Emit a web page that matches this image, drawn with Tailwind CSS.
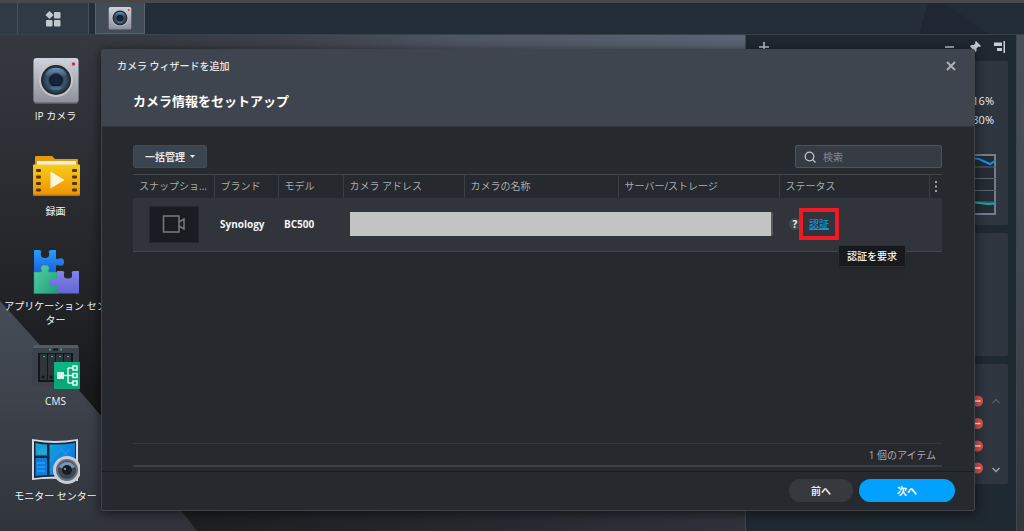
<!DOCTYPE html>
<html lang="ja">
<head>
    <meta charset="utf-8">
    <title>Surveillance Station</title>
    <script src="https://cdn.jsdelivr.net/npm/@tailwindcss/browser@4"></script>
</head>
<body class="h-screen overflow-hidden relative flex flex-col bg-[#2d3037] font-['Open_Sans','Noto_Sans_CJK_JP',sans-serif] text-[10px] leading-[14px] text-gray-200">

    <!-- wallpaper -->
    <svg class="absolute inset-0 w-full h-full -z-10" viewBox="0 0 1024 531" preserveAspectRatio="none" aria-hidden="true">
        <defs>
            <linearGradient id="wallTop" x1="0" y1="0" x2="0" y2="1">
                <stop offset="0" stop-color="#383c43"/><stop offset="0.35" stop-color="#2a2c31"/><stop offset="0.6" stop-color="#1f2124"/><stop offset="0.8" stop-color="#141517"/><stop offset="1" stop-color="#141517"/>
            </linearGradient>
            <linearGradient id="wallBand" x1="0" y1="0" x2="1" y2="0">
                <stop offset="0.08" stop-color="#3a3e46" stop-opacity="0"/><stop offset="0.45" stop-color="#4f5663"/><stop offset="0.73" stop-color="#5a6575"/><stop offset="1" stop-color="#444b57"/>
            </linearGradient>
            <linearGradient id="wallFloor" x1="0" y1="0" x2="1" y2="0">
                <stop offset="0" stop-color="#1c1d20"/><stop offset="1" stop-color="#31333c"/>
            </linearGradient>
            <linearGradient id="wallLow" x1="0" y1="0" x2="0" y2="1">
                <stop offset="0" stop-color="#464d57"/><stop offset="1" stop-color="#31343b"/>
            </linearGradient>
            <linearGradient id="wallRight" x1="0" y1="0" x2="0" y2="1">
                <stop offset="0" stop-color="#4a515d"/><stop offset="0.5" stop-color="#424853"/><stop offset="1" stop-color="#34363b"/>
            </linearGradient>
        </defs>
        <rect width="1024" height="531" fill="url(#wallTop)"/>
        <rect width="1024" height="60" fill="url(#wallBand)"/>
        <rect x="150" y="500" width="610" height="31" fill="url(#wallFloor)"/>
        <path d="M0 301L40 345L103 418L181 510L197 531H0z" fill="url(#wallLow)"/>
        <rect x="1010" width="14" height="531" fill="url(#wallRight)"/>
    </svg>

    <!-- taskbar -->
    <header class="h-[35px] shrink-0 flex border-t-3 border-b border-t-[#484848] border-b-[#39424b] bg-[#242e38] relative">
        <div class="w-[18px] border-r border-[#46525d] bg-[#2f3a44]"></div>
        <button class="w-[71px] flex items-center justify-center border-r border-[#46525d] bg-[#2f3a44]" aria-label="メイン メニュー">
            <svg class="w-4 h-4" viewBox="0 0 16 16" fill="#c3c8cd">
                <path d="M4.500 0L8.600 4L4.500 8L.400 4z"/>
                <rect x="9" y="1" width="6.500" height="6.500" rx="1"/>
                <rect x="1" y="9" width="6.500" height="6.500" rx="1"/>
                <rect x="9" y="9" width="6.500" height="6.500" rx="1"/>
            </svg>
        </button>
        <button class="ml-[6px] w-[50px] flex items-center justify-center border border-t-0 border-[#56616c] bg-[#414c57]" aria-label="IP カメラ">
            <svg class="w-6 h-6" viewBox="0 0 48 48"><use href="#camera"/></svg>
        </button>
        <svg class="ml-auto w-[105px] h-full" viewBox="0 0 105 31" preserveAspectRatio="none" aria-hidden="true">
            <path d="M9 0H105V31H0z" fill="#1e2732"/>
            <path d="M25 0H105V31H70z" fill="#222c37"/>
        </svg>
    </header>

    <main class="flex-1 min-h-0 flex justify-between">
        <!-- desktop shortcuts -->
        <nav class="w-[111px] pt-[21px] text-center text-gray-100 [&>a]:h-[95px] [&>a]:flex [&>a]:flex-col [&>a]:items-center [&>a]:gap-[5px] [&_svg]:w-12 [&_svg]:h-12 [&_svg]:shrink-0">
            <a href="#">
                <svg viewBox="0 0 48 48">
                    <defs>
                        <linearGradient id="camBody" x1="0" y1="0" x2="0" y2="1"><stop offset="0" stop-color="#cfd3de"/><stop offset="1" stop-color="#8d9099"/></linearGradient>
                        <radialGradient id="camLens" cx="0.5" cy="0.5" r="0.5"><stop offset="0" stop-color="#1c2c4c"/><stop offset="0.35" stop-color="#131d2c"/><stop offset="0.65" stop-color="#3a566d"/><stop offset="1" stop-color="#27333e"/></radialGradient>
                        <linearGradient id="camShine" x1="0" y1="0" x2="0" y2="1"><stop offset="0" stop-color="#6ea0c4" stop-opacity="0.9"/><stop offset="1" stop-color="#6ea0c4" stop-opacity="0"/></linearGradient>
                    </defs>
                    <g id="camera">
                        <rect x="1.500" y="3" width="45" height="45" rx="3" fill="#55585f"/>
                        <rect x="1.500" y="2" width="45" height="44.500" rx="3" fill="url(#camBody)"/>
                        <circle cx="24" cy="24" r="17" fill="#c3c5cb"/>
                        <circle cx="24" cy="24" r="15" fill="#23292f"/>
                        <circle cx="24" cy="24" r="13.500" fill="url(#camLens)"/>
                        <path d="M13 19A12 12 0 0 1 35 19Q24 24 13 19z" fill="url(#camShine)"/>
                        <circle cx="24" cy="24" r="6" fill="#17243b" stroke="#0f1722"/>
                        <ellipse cx="24" cy="32" rx="6" ry="2" fill="#4382a8" opacity="0.6"/>
                        <circle cx="41.500" cy="8" r="1.800" fill="#dc2f36"/>
                    </g>
                </svg>
                <span>IP カメラ</span>
            </a>
            <a href="#">
                <svg viewBox="0 0 48 48">
                    <defs>
                        <linearGradient id="folder" x1="0" y1="0" x2="0" y2="1"><stop offset="0" stop-color="#f9cb1c"/><stop offset="1" stop-color="#ee9503"/></linearGradient>
                    </defs>
                    <path d="M3 6Q3 5 4 5H20L23 8H45Q46 8 46 9V18H3z" fill="#e79a0c"/>
                    <path d="M5 10H44V16H5z" fill="#f0f0ec"/>
                    <path d="M1 14H48V44Q48 45 47 45H2Q1 45 1 44z" fill="#bd7209"/>
                    <rect x="1" y="13.500" width="47" height="30" rx="1" fill="url(#folder)"/>
                    <g fill="#503708">
                        <rect x="4" y="18" width="5" height="3" rx="1"/><rect x="4" y="24.500" width="5" height="3" rx="1"/><rect x="4" y="31" width="5" height="3" rx="1"/><rect x="4" y="37.500" width="5" height="3" rx="1"/>
                        <rect x="40" y="18" width="5" height="3" rx="1"/><rect x="40" y="24.500" width="5" height="3" rx="1"/><rect x="40" y="31" width="5" height="3" rx="1"/><rect x="40" y="37.500" width="5" height="3" rx="1"/>
                    </g>
                    <path d="M18.500 20.500L32.500 29L18.500 37.500z" fill="#fff4dc"/>
                </svg>
                <span>録画</span>
            </a>
            <a href="#">
                <svg viewBox="0 0 48 48">
                    <defs>
                        <linearGradient id="pzBlue" x1="0" y1="0" x2="0" y2="1"><stop offset="0" stop-color="#2a9cff"/><stop offset="1" stop-color="#1b62d8"/></linearGradient>
                        <linearGradient id="pzGreen" x1="0" y1="0" x2="1" y2="1"><stop offset="0" stop-color="#55d3a4"/><stop offset="1" stop-color="#1f9d79"/></linearGradient>
                        <linearGradient id="pzViolet" x1="0" y1="0" x2="0" y2="1"><stop offset="0" stop-color="#8583e8"/><stop offset="1" stop-color="#6566d6"/></linearGradient>
                    </defs>
                    <path d="M2 4H7Q10 4 9 7Q8 12 13 12Q18 12 17 7Q16 4 19 4H24V12Q24 14 27 12.500Q32 11 32 16Q32 21 27 19.500Q24 18 24 21V26H2z" fill="url(#pzBlue)"/>
                    <path d="M2 26H8Q11 26 9 23.500Q8 19 13 19Q18 19 17 23.500Q15 26 18 26H25V47.500H2z" fill="url(#pzGreen)" stroke="#2a8f86" stroke-width="0.500"/>
                    <path d="M25 25H30Q33 25 32 28Q31 32.500 36 32.500Q41 32.500 40 28Q39 25 42 25H47V47.500H25V42Q25 39 22 40Q17 41 17 36.500Q18 32 22 33.500Q25 35 25 31z" fill="url(#pzViolet)"/>
                </svg>
                <span class="w-full">アプリケーション センター</span>
            </a>
            <a href="#">
                <svg viewBox="0 0 48 48">
                    <path d="M1 5L3 4H45L47 6V43Q47 45 45 45H2Q0 45 0 43z" fill="#3c414b"/>
                    <path d="M2 4H46V7H1z" fill="#555b66"/>
                    <rect x="6" y="12" width="35" height="29" fill="#14171a"/>
                    <g fill="#30343b"><rect x="8" y="13" width="7" height="26"/><rect x="16" y="13" width="7" height="26"/><rect x="24" y="13" width="7" height="26"/><rect x="32" y="13" width="7" height="26"/></g>
                    <g fill="#2cc48b"><rect x="11" y="15" width="2" height="1"/><rect x="19" y="15" width="2" height="1"/><rect x="27" y="15" width="2" height="1"/><rect x="35" y="15" width="2" height="1"/><circle cx="18" cy="8.500" r="1"/><circle cx="29" cy="8.500" r="1"/></g>
                    <path d="M21 8.500H26" stroke="#15171a" stroke-width="2"/>
                    <g fill="#111316"><circle cx="11" cy="36" r="1.500"/><circle cx="19" cy="36" r="1.500"/></g>
                    <rect x="22" y="21" width="27" height="27" rx="1" fill="#0cb584"/>
                    <path d="M22 35L49 21V48H22z" fill="#079a70" opacity="0.500"/>
                    <rect x="25" y="31" width="7" height="7" fill="#d8f5e9"/>
                    <path d="M32 34.500H41M36 27V42M36 27H41M36 42H41" stroke="#d8f5e9" stroke-width="1.500" fill="none"/>
                    <g fill="#0cb584" stroke="#e6faf1" stroke-width="1.500"><rect x="41" y="25" width="4" height="4"/><rect x="41" y="32.500" width="4" height="4"/><rect x="41" y="40" width="4" height="4"/></g>
                </svg>
                <span>CMS</span>
            </a>
            <a href="#">
                <svg viewBox="0 0 48 48">
                    <defs><linearGradient id="monitor" x1="0" y1="0" x2="1" y2="1"><stop offset="0" stop-color="#10a5df"/><stop offset="1" stop-color="#0b63dc"/></linearGradient></defs>
                    <path d="M0 3Q23 7 46 3V45Q23 41 0 44z" fill="#d5dae0"/>
                    <path d="M2 5Q23 9 44 5V42Q23 39 2 42z" fill="#15283a"/>
                    <path d="M3.500 7Q10 8.500 15 8.500V19.500H3.500z" fill="#16a0d2"/>
                    <path d="M3.500 22H15V39L3.500 40z" fill="#0a7fe2"/>
                    <path d="M17.500 8.500Q32 9 43 7V40Q30 38 17.500 39z" fill="url(#monitor)"/>
                    <path d="M18 25L29 13L43 27M18 34L38 13" stroke="#2b8cf0" stroke-width="1.500" fill="none"/>
                    <path d="M7 18V14M10 18V11M13 18V13M5 27H13M5 31H13M5 35H13" stroke="#38b1e9" stroke-width="1"/>
                    <circle cx="35" cy="34" r="14" fill="#c9ccd5"/>
                    <circle cx="35" cy="34" r="11" fill="#666c75"/>
                    <circle cx="35" cy="34" r="9" fill="#3b4654"/>
                    <path d="M27 31A9 9 0 0 1 43 31Q35 35 27 31z" fill="#7d95ae"/>
                    <circle cx="35" cy="34" r="5" fill="#151d27"/>
                    <circle cx="33" cy="33" r="1" fill="#9bb1c6"/>
                </svg>
                <span>モニター センター</span>
            </a>
        </nav>

        <!-- widget panel -->
        <aside class="w-[272px] mr-[7px] px-2 flex flex-col gap-2 border border-y-0 border-[#41474f] bg-[#1f2932] text-[11px] font-medium text-gray-100">
            <div class="h-[18px] pt-[5px] pl-[2px] flex items-center justify-between text-[#c8cdd3]">
                <button aria-label="追加"><svg class="w-4 h-4" viewBox="0 0 16 16" stroke="currentColor" stroke-width="1.500"><path d="M8 3V13M3 8H13"/></svg></button>
                <div class="flex gap-[9px]">
                    <button aria-label="最小化"><svg class="w-4 h-4" viewBox="0 0 16 16" stroke="currentColor" stroke-width="1.500"><path d="M3 8H12"/></svg></button>
                    <button aria-label="固定"><svg class="w-4 h-4" viewBox="0 0 16 16" fill="currentColor"><path d="M9 2L14 7L12.500 8L11.500 7.500L9.500 9.500L9.500 12L8 13L5.500 10L3 13L2.500 12.500L5 9.500L3 7.500L4 6L6.500 6L8.500 4.500L8 3z"/></svg></button>
                    <button aria-label="右に揃える"><svg class="w-4 h-4" viewBox="0 0 16 16" fill="currentColor"><path d="M2 3.500H10V7H2zM5 9H10V12H5zM11.500 2H13V14H11.500z"/></svg></button>
                </div>
            </div>
            <section class="h-[164px] rounded-xs bg-[#2f3640] px-3 pt-[31px] flex flex-col text-right">
                <span class="h-[19px] leading-[18px] pr-[2px]">16%</span>
                <span class="h-[19px] leading-[18px] pr-[2px]">30%</span>
                <svg class="mt-6 w-full h-[61px] shrink-0" viewBox="0 0 230 61" preserveAspectRatio="none" fill="none">
                    <rect x="1" y="1" width="228" height="59" fill="#252c34" stroke="#747d8d" stroke-width="2"/>
                    <path d="M0 13H230M0 24.500H230M0 36.500H230M0 48H230" stroke="#5a6370"/>
                    <path d="M0 6L205 4L213 5L224 10L229 7" stroke="#0b94e8" stroke-width="2"/>
                    <path d="M0 48L205 48L222 50L229 49.500" stroke="#16a7a5" stroke-width="2"/>
                </svg>
            </section>
            <section class="h-[123px] rounded-xs bg-[#2f3640]"></section>
            <section class="h-[120px] rounded-xs bg-[#2f3640] py-[26px] pr-[6px] flex justify-end gap-[7px]">
                <svg class="w-[11px] h-[90px]" viewBox="0 0 11 90">
                    <g fill="#e2504b"><circle cx="5.500" cy="11" r="5.500"/><circle cx="5.500" cy="33.500" r="5.500"/><circle cx="5.500" cy="56" r="5.500"/><circle cx="5.500" cy="78" r="5.500"/></g>
                    <path d="M2.500 11H8.500M2.500 33.500H8.500M2.500 56H8.500M2.500 78H8.500" stroke="#ffe9e6" stroke-width="1.500"/>
                </svg>
                <svg class="w-[12px] h-[90px]" viewBox="0 0 12 90" fill="none">
                    <path d="M2.500 13L6 9.500L9.500 13" stroke="#5a626d" stroke-width="1.200"/>
                    <path d="M2.500 78L6 81.500L9.500 78" stroke="#98a0aa" stroke-width="1.500"/>
                </svg>
            </section>
        </aside>
    </main>

    <!-- add camera wizard -->
    <div role="dialog" aria-labelledby="wizardTitle" class="absolute left-[101px] right-[49px] top-[49px] bottom-[20px] flex flex-col border border-[#404448] rounded-xs bg-[#26292e] shadow-[0_2px_12px_rgba(0,0,0,0.6)]">
        <div class="h-[77px] shrink-0 bg-[#3f454e] border-b border-[#33373d] pt-[9px] pl-[15px] pr-[16px]">
            <div class="flex items-center justify-between">
                <span id="wizardTitle" class="font-medium">カメラ ウィザードを追加</span>
                <button aria-label="閉じる"><svg class="w-[14px] h-[14px]" viewBox="0 0 14 14" stroke="#b0b4b9" stroke-width="1.800"><path d="M3 3L11 11M11 3L3 11"/></svg></button>
            </div>
            <h1 class="mt-[18px] ml-4 text-[13px] leading-5 font-bold text-white">カメラ情報をセットアップ</h1>
        </div>

        <div class="flex-1 min-h-0 flex flex-col pl-[31px] pr-8 pt-[18px] pb-1">
            <div class="flex justify-between">
                <button class="h-[23px] w-[74px] flex items-center justify-center gap-[5px] rounded-xs border border-[#414b55] bg-[#3b454f] font-bold text-gray-200">
                    一括管理
                    <svg class="w-[5px] h-[3px]" viewBox="0 0 5 3" fill="currentColor"><path d="M0 0H5L2.500 3z"/></svg>
                </button>
                <label class="h-[23px] w-[147px] flex items-center gap-[7px] px-2 rounded-xs border border-[#4b555f] bg-[#353c44]">
                    <svg class="w-3 h-3 shrink-0" viewBox="0 0 12 12" fill="none" stroke="#c2c6ca" stroke-width="1.300"><circle cx="5.500" cy="5.500" r="4.300"/><path d="M8.500 8.500L11.500 11.500"/></svg>
                    <input type="text" placeholder="検索" aria-label="検索" class="min-w-0 flex-1 bg-transparent outline-none placeholder:text-[#82878d]">
                </label>
            </div>

            <table class="mt-[6px] w-full table-fixed border-collapse text-left">
                <colgroup>
                    <col class="w-[81px]">
                    <col class="w-[64px]">
                    <col class="w-[65px]">
                    <col class="w-[121px]">
                    <col class="w-[154px]">
                    <col class="w-[161px]">
                    <col>
                    <col class="w-[13px]">
                </colgroup>
                <thead>
                    <tr class="h-[23px] border-t border-[#42464b] text-[#a8abaf] [&>th]:font-normal [&>th]:px-[6px] [&>th]:whitespace-nowrap [&>th+th]:border-l [&>th+th]:border-[#3a3e43]">
                        <th>スナップショ...</th>
                        <th>ブランド</th>
                        <th>モデル</th>
                        <th>カメラ アドレス</th>
                        <th>カメラの名称</th>
                        <th>サーバー/ストレージ</th>
                        <th>ステータス</th>
                        <th class="!px-0"><button class="flex w-full justify-center" aria-label="列"><svg class="w-[2px] h-[11px]" viewBox="0 0 2 11" fill="#a0a3a7"><path d="M0 0H2V2H0zM0 4.500H2V6.500H0zM0 9H2V11H0z"/></svg></button></th>
                    </tr>
                </thead>
                <tbody>
                    <tr class="h-[54px] border-b border-[#42474c] bg-[#31353b] font-bold text-gray-100 [&>td]:px-[6px]">
                        <td>
                            <div class="mx-auto w-[50px] h-[37px] flex items-center justify-center border border-[#24272b] bg-[#191c20]">
                                <svg class="w-6 h-5" viewBox="0 0 24 20" fill="none" stroke="#77797c" stroke-width="1.500"><rect x="1.500" y="2" width="15.500" height="16"/><path d="M17 8L22 5V15L17 12"/></svg>
                            </div>
                        </td>
                        <td>Synology</td>
                        <td>BC500</td>
                        <td colspan="3"><div class="h-[24px] ml-px rounded-r-xs border-r-2 border-[#535b64] bg-[#c3c3c3]"></div></td>
                        <td>
                            <div class="flex items-center gap-1 pl-1">
                                <span class="w-3 h-3 rounded-full bg-[#424850] text-center leading-3">?</span>
                                <span class="relative ml-1">
                                    <a href="#" class="font-medium text-[#0c93ea] underline">認証</a>
                                    <span class="absolute -inset-x-[10px] -inset-y-[9px] border-4 border-[#ed1c24] pointer-events-none"></span>
                                    <span role="tooltip" class="absolute left-[29px] top-[28px] w-[68px] h-[22px] flex items-center justify-center rounded-xs border border-[#2b2f32] bg-[#17191c] font-medium whitespace-nowrap shadow-md">認証を要求</span>
                                </span>
                            </div>
                        </td>
                        <td></td>
                    </tr>
                </tbody>
            </table>

            <div class="mt-auto h-[24px] flex items-center justify-end px-[6px] border-t border-b-2 border-t-[#34373c] border-b-[#3b3f43] text-[#a8abaf]">1 個のアイテム</div>
        </div>

        <div class="h-[39px] shrink-0 flex items-center justify-end gap-[6px] pr-[19px] pb-px border-t border-[#1b1e21]">
            <button class="w-16 h-[23px] rounded-full bg-[#36393e] font-bold text-gray-200">前へ</button>
            <button class="w-24 h-[23px] rounded-full bg-[#00a1ff] font-bold text-white">次へ</button>
        </div>
    </div>
</body>
</html>
